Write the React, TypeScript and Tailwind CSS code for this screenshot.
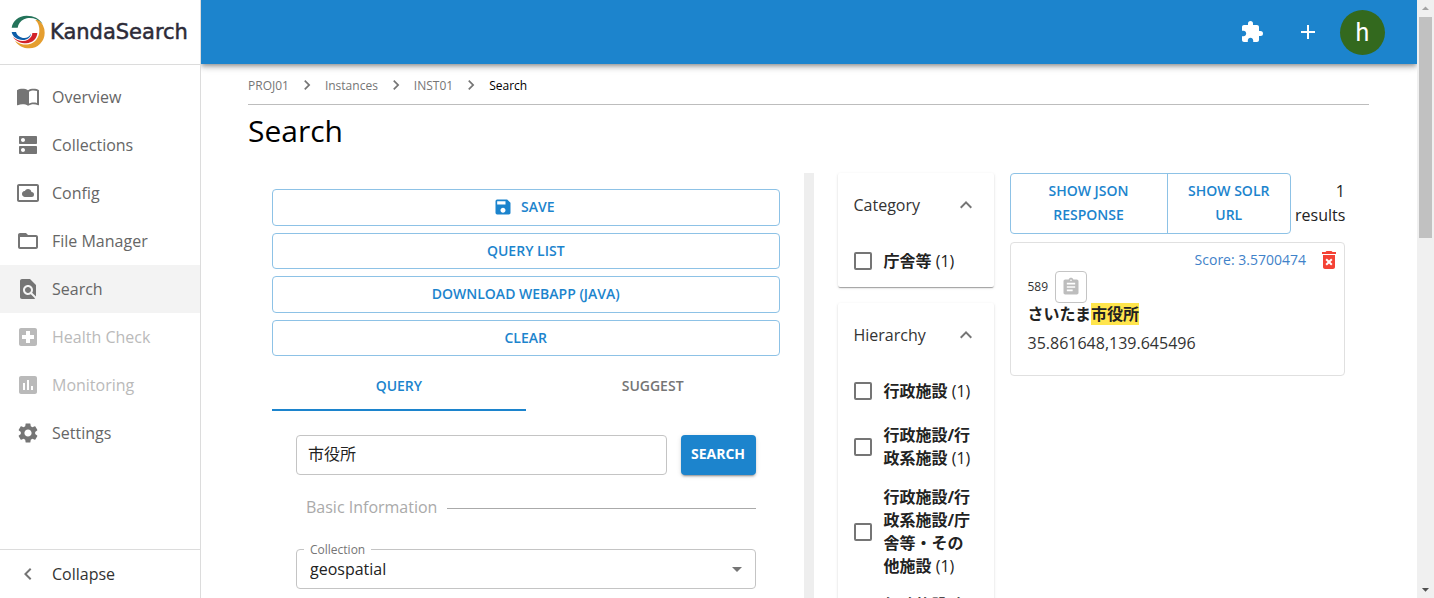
import {ReactNode, useState} from "react";
import {
	MdAdd, MdArrowDropDown, MdArrowDropUp, MdAssessment, MdAssignment, MdChevronLeft, MdChevronRight,
	MdDeleteForever, MdDns, MdExpandLess, MdExtension, MdFindInPage, MdFolderOpen, MdLocalHospital,
	MdSave, MdSettings, MdSettingsSystemDaydream
} from "react-icons/md";

type NavItem = { label: string; icon: ReactNode; disabled?: boolean };
type Facet = { title: string; items: { name: string; count: number }[] };

const navItems: NavItem[] = [
	{ label: "Overview", icon: <BookIcon /> },
	{ label: "Collections", icon: <MdDns /> },
	{ label: "Config", icon: <MdSettingsSystemDaydream /> },
	{ label: "File Manager", icon: <MdFolderOpen /> },
	{ label: "Search", icon: <MdFindInPage /> },
	{ label: "Health Check", icon: <MdLocalHospital />, disabled: true },
	{ label: "Monitoring", icon: <MdAssessment />, disabled: true },
	{ label: "Settings", icon: <MdSettings /> },
];

const facets: Facet[] = [
	{ title: "Category", items: [{ name: "庁舎等", count: 1 }] },
	{
		title: "Hierarchy",
		items: [
			{ name: "行政施設", count: 1 },
			{ name: "行政施設/行政系施設", count: 1 },
			{ name: "行政施設/行政系施設/庁舎等・その他施設", count: 1 },
			{ name: "行政施設/行", count: 1 },
		],
	},
];

function BookIcon() {
	return (
		<svg width="24" height="24" viewBox="0 0 24 24" fill="currentColor">
			<path d="M12 5.2C10.5 4.2 8.5 3.8 6.5 3.8S2.500 4.200 1 5.200V19.700c0 .4.4.6.8.5 1.400-.7 3-1 4.700-1 2 0 4 .4 5.500 1.500 1.400-.9 3.800-1.500 5.500-1.500 1.600 0 3.300.3 4.700 1 .4.200.8-.1.8-.5V5.200c-1.400-1-3.500-1.400-5.500-1.400s-4 .4-5.500 1.400zM21 18c-1.100-.4-2.300-.5-3.500-.5-1.500 0-3.300.4-4.500 1.100V6.800c1.200-.7 3-1.200 4.500-1.200 1.200 0 2.400.2 3.500.5V18z" />
		</svg>
	);
}

function LogoMark() {
	return (
		<svg width="34" height="34" viewBox="33 45 102 102">
			<path fill="#e59e2f" d="M115 59A49 49 0 0 1 134 98A47 47 0 0 1 88 145C70 145 54 137 45 122C58 131 73 136 86 133C104 130 117 114 118 94C119 80 115 68 106 60Z" />
			<path fill="#24735a" d="M35 83C38 62 56 47 80 47C101 47 118 55 128 72C113 54 88 50 72 58C61 63 55 72 53 83Z" />
			<path fill="#d2232a" d="M39 111C52 123 70 126 84 119C92 114 97 107 97 99H112C111 116 97 129 79 130C62 130 47 123 39 111Z" />
			<path fill="#0f5ea8" d="M35 96H48C51 107 61 114 73 114C81 114 89 109 93 101C92 111 82 120 68 120C52 119 38 111 35 96Z" />
		</svg>
	);
}

function Sidebar() {
	return (
		<aside className="relative z-10 flex w-[201px] shrink-0 flex-col border-r border-[#dcdcdc] bg-white">
			<a href="#home" className="flex h-[65px] items-center border-b border-[#dcdcdc] pb-px pl-[11px]">
				<LogoMark />
				<span className="ml-[5px] font-['DejaVu_Sans',sans-serif] text-[21px] text-[#2d2b38] [-webkit-text-stroke:0.5px_#2d2b38]">KandaSearch</span>
			</a>
			<nav className="mt-2 flex-1">
				{navItems.map((item) => (
					<a
						key={item.label}
						href="#nav"
						aria-disabled={item.disabled}
						className={`flex h-12 items-center gap-3 pl-4 ${item.disabled ? "text-[#bababa]" : "text-[#666666]"} ${item.label === "Search" ? "bg-[#f3f3f3]" : ""}`}
					>
						<span className={`text-[24px] ${item.disabled ? "text-[#bababa]" : "text-[#757575]"}`}>{item.icon}</span>
						{item.label}
					</a>
				))}
			</nav>
			<button className="flex h-[49px] items-center gap-3 border-t border-[#dcdcdc] pl-4 text-[#333333]">
				<MdChevronLeft className="text-[24px] text-[#757575]" />
				Collapse
			</button>
		</aside>
	);
}

function Header() {
	return (
		<header className="flex h-16 shrink-0 items-center justify-end bg-[#1c84cd] pr-8 text-white shadow-[0_2px_4px_-1px_rgba(0,0,0,0.3),0_4px_5px_0_rgba(0,0,0,0.14),0_1px_10px_0_rgba(0,0,0,0.12)]">
			<button aria-label="Extensions"><MdExtension size={24} /></button>
			<button aria-label="Add" className="ml-8"><MdAdd size={24} /></button>
			<button className="ml-5 flex size-[45px] items-center justify-center rounded-full bg-[#33691e] pt-0.5 font-['Roboto',sans-serif] text-[25px]">h</button>
		</header>
	);
}

function Breadcrumbs() {
	return (
		<nav aria-label="breadcrumb" className="flex h-10 items-center border-b border-[#bdbdbd] pt-0.5 text-[12px] text-[#757575]">
			{["PROJ01", "Instances", "INST01"].map((crumb) => (
				<span key={crumb} className="flex items-center">
					<a href="#crumb">{crumb}</a>
					<MdChevronRight className="mx-2 -mt-0.5 text-[20px]" />
				</span>
			))}
			<span className="text-black">Search</span>
		</nav>
	);
}

function QueryPanel() {
	const [query, setQuery] = useState<string>("市役所");
	const [tab, setTab] = useState<string>("QUERY");
	const outlined = "flex items-center justify-center rounded border border-[#8dc2e6] text-[14px] font-semibold text-[#1c84cd]";

	return (
		<section className="min-w-0 flex-1 px-6 pt-4">
			<div className="grid h-[167px] grid-rows-4 gap-[7px]">
				<button className={outlined}><MdSave className="mr-2 -ml-1 text-[20px]" />SAVE</button>
				<button className={outlined}>QUERY LIST</button>
				<button className={outlined}>DOWNLOAD WEBAPP (JAVA)</button>
				<button className={outlined}>CLEAR</button>
			</div>
			<div role="tablist" className="mt-[7px] flex">
				{["QUERY", "SUGGEST"].map((name) => (
					<button
						key={name}
						role="tab"
						aria-selected={tab === name}
						onClick={() => setTab(name)}
						className={`h-12 flex-1 border-b-2 text-[14px] font-semibold ${tab === name ? "border-[#1c84cd] text-[#1c84cd]" : "border-transparent text-[#757575]"}`}
					>
						{name}
					</button>
				))}
			</div>
			<div className="p-6">
				<div className="flex gap-[14px]">
					<input
						type="text"
						aria-label="Query"
						value={query}
						onChange={(e) => setQuery(e.target.value)}
						className="h-10 min-w-0 flex-1 rounded border border-[#c4c4c4] px-[11px] pb-1 text-[#222222]"
					/>
					<button className="h-10 w-[75px] rounded bg-[#1c84cd] pb-0.5 text-[14px] font-bold text-white shadow-[0_3px_1px_-2px_rgba(0,0,0,0.2),0_2px_2px_0_rgba(0,0,0,0.14),0_1px_5px_0_rgba(0,0,0,0.12)]">SEARCH</button>
				</div>
				<h2 className="mt-5 flex items-center gap-[10px] pl-[10px] text-[#aaaaaa] after:mt-0.5 after:h-px after:flex-1 after:bg-[#aaaaaa]">
					Basic Information
				</h2>
				<div className="relative mt-[30px]">
					<label htmlFor="collection" className="absolute -top-[7px] left-2 bg-white px-[6px] text-[12px] leading-4 text-[#757575]">Collection</label>
					<select id="collection" className="h-10 w-full appearance-none rounded border border-[#c4c4c4] bg-white px-[13px] text-[#222222]">
						<option>geospatial</option>
					</select>
					<MdArrowDropDown className="pointer-events-none absolute top-2 right-[7px] text-[24px] text-[#757575]" />
				</div>
			</div>
		</section>
	);
}

function FacetCard({ facet }: { facet: Facet }) {
	return (
		<div className="rounded-[2px] bg-white px-4 pb-[9px] shadow-[0_2px_1px_-1px_rgba(0,0,0,0.2),0_1px_1px_0_rgba(0,0,0,0.14),0_1px_3px_0_rgba(0,0,0,0.12)]">
			<button className="flex h-16 w-full items-center justify-between text-[#333333]">
				{facet.title}
				<MdExpandLess className="text-[24px] text-[#757575]" />
			</button>
			<div className="flex flex-col gap-4 pt-[7px]">
				{facet.items.map((item) => (
					<label key={item.name} className="flex min-h-[34px] items-center gap-3 leading-[23px] text-[#222222]">
						<input type="checkbox" className="size-[18px] shrink-0 appearance-none rounded-[2px] border-2 border-[#757575] checked:bg-[#1c84cd]" />
						<span className="font-bold">{item.name} <span className="font-medium">({item.count})</span></span>
					</label>
				))}
			</div>
		</div>
	);
}

function Results() {
	return (
		<section className="min-w-0 flex-1">
			<div className="flex gap-1">
				<div className="flex h-[61px] flex-1 rounded border border-[#8dc2e6] text-[14px] leading-6 font-semibold text-[#1c84cd]">
					<button className="w-[156px] px-8 pb-0.5">SHOW JSON RESPONSE</button>
					<button className="flex-1 border-l border-[#8dc2e6] px-4 pb-0.5">SHOW SOLR URL</button>
				</div>
				<p className="w-[50px] pt-1.5 text-right text-[#222222]">1 results</p>
			</div>
			<article className="mt-2 h-[134px] rounded border border-[#e0e0e0] px-[17px] pt-[5px] text-[#333333]">
				<div className="-mr-[14px] flex items-center justify-end gap-[11px] text-[14px] text-[#3f82c9]">
					Score: 3.5700474
					<button aria-label="Delete"><MdDeleteForever size={24} className="text-[#f44336]" /></button>
				</div>
				<div className="-mt-px flex items-center gap-[7px] text-[12px]">
					589
					<button aria-label="Copy" className="flex size-8 items-center justify-center rounded border border-[#c4c4c4] text-[#bdbdbd]"><MdAssignment size={20} /></button>
				</div>
				<h3 className="leading-[22px] font-bold text-[#222222]">さいたま<mark className="bg-[#ffe54c] text-inherit">市役所</mark></h3>
				<p className="mt-1.5">35.861648,139.645496</p>
			</article>
		</section>
	);
}

function Scrollbar() {
	return (
		<div aria-hidden="true" className="flex w-[17px] shrink-0 flex-col items-center bg-[#f0f0f0]">
			<MdArrowDropUp className="h-[17px] w-[17px] text-[#a3a3a3]" />
			<div className="h-[221px] w-[13px] bg-[#c1c1c1]" />
			<MdArrowDropDown className="mt-auto h-[17px] w-[17px] text-[#505050]" />
		</div>
	);
}

export default function App() {
	return (
		<div className="flex h-screen overflow-hidden bg-white font-['Open_Sans','Noto_Sans_CJK_JP',sans-serif] text-[16px] leading-6">
			<Sidebar />
			<div className="flex min-w-0 flex-1 flex-col">
				<Header />
				<main className="flex min-h-0 flex-1 flex-col overflow-hidden pt-px pr-12 pl-[47px]">
					<Breadcrumbs />
					<h1 className="mt-1.5 mb-[22px] text-[30px] leading-10 text-black">Search</h1>
					<div className="flex min-h-0 flex-1">
						<QueryPanel />
						<div className="w-[10px] bg-[#eeeeee]" />
						<div className="flex min-w-0 flex-1 gap-4 px-6">
							<div className="flex w-[156px] shrink-0 flex-col gap-4">
								{facets.map((facet) => <FacetCard key={facet.title} facet={facet} />)}
							</div>
							<Results />
						</div>
					</div>
				</main>
			</div>
			<Scrollbar />
		</div>
	);
}
